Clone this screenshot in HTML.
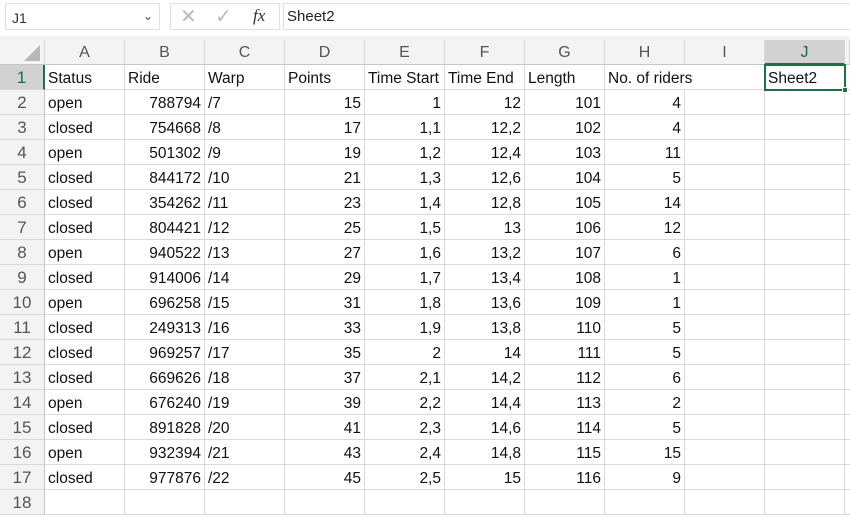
<!DOCTYPE html>
<html><head><style>
*{margin:0;padding:0;box-sizing:border-box}
body{width:850px;height:515px;overflow:hidden;background:#fff;font-family:"Liberation Sans",sans-serif;position:relative}
.top{position:absolute;left:0;top:0;width:850px;height:40px;background:#fff}
.nb{position:absolute;left:5px;top:3px;width:155px;height:27px;border:1px solid #e1e1e1;font-size:14px;color:#333;padding:6px 0 0 6px}
.nb span{position:absolute;right:6px;top:5px;font-size:12px;color:#444}
.fx{position:absolute;left:170px;top:3px;width:110px;height:27px;border:1px solid #e1e1e1;color:#bbb;font-size:20px}
.fb{position:absolute;left:283px;top:3px;width:567px;height:27px;border:1px solid #e1e1e1;border-right:none;font-size:15px;color:#222;padding:4px 0 0 3px}
.sep{position:absolute;left:0;top:36px;width:850px;height:4px;background:#f3f3f3}
.grid{position:absolute;left:0;top:40px}
.ch{position:absolute;top:0;height:25px;background:#f3f3f3;border-right:1px solid #d8d8d8;border-bottom:1px solid #c6c6c6;text-align:center;font-size:16px;color:#555;line-height:25px}
.rh{position:absolute;left:0;width:45px;height:25px;background:#f3f3f3;border-bottom:1px solid #d8d8d8;border-right:1px solid #c6c6c6;text-align:center;font-size:17px;color:#555;line-height:26px}
.c{position:absolute;height:25px;border-right:1px solid #dadada;border-bottom:1px solid #dadada;font-size:15.5px;color:#111;line-height:27px;padding:0 3px;white-space:nowrap}
.r{text-align:right}
</style></head><body>
<div class="top">
<div class="nb">J1<span>&#8964;</span></div>
<div class="fx"><span style="position:absolute;left:9px;top:0px">&#x2715;</span><span style="position:absolute;left:44px;top:0px">&#x2713;</span><span style="position:absolute;left:82px;top:2px;color:#333;font-family:'Liberation Serif',serif;font-style:italic;font-size:17px">fx</span></div>
<div class="fb">Sheet2</div>
</div>
<div class="sep"></div>
<div class="grid" id="g"></div>
<script>
var g=document.getElementById('g'),h='';
var cols='ABCDEFGHIJ'.split('');
h+='<div class="ch" style="left:0;width:45px"><svg width="45" height="25" style="position:absolute;left:0;top:0"><polygon points="40,5 40,21 24,21" fill="#b8b8b8"/></svg></div>';
for(var i=0;i<10;i++){var sel=i==9;h+='<div class="ch" style="left:'+(45+i*80)+'px;width:80px;'+(sel?'background:#d2d2d2;color:#1e6b40;border-bottom:2px solid #1e7145;':'')+'">'+cols[i]+'</div>';}
h+='<div class="ch" style="left:845px;width:5px"></div>';
var d=[["Status","Ride","Warp","Points","Time Start","Time End","Length","No. of riders"],
["open",788794,"/7",15,"1","12",101,4],["closed",754668,"/8",17,"1,1","12,2",102,4],["open",501302,"/9",19,"1,2","12,4",103,11],["closed",844172,"/10",21,"1,3","12,6",104,5],["closed",354262,"/11",23,"1,4","12,8",105,14],["closed",804421,"/12",25,"1,5","13",106,12],["open",940522,"/13",27,"1,6","13,2",107,6],["closed",914006,"/14",29,"1,7","13,4",108,1],["open",696258,"/15",31,"1,8","13,6",109,1],["closed",249313,"/16",33,"1,9","13,8",110,5],["closed",969257,"/17",35,"2","14",111,5],["closed",669626,"/18",37,"2,1","14,2",112,6],["open",676240,"/19",39,"2,2","14,4",113,2],["closed",891828,"/20",41,"2,3","14,6",114,5],["open",932394,"/21",43,"2,4","14,8",115,15],["closed",977876,"/22",45,"2,5","15",116,9],[]];
for(var r=0;r<18;r++){var y=25+r*25;
h+='<div class="rh" style="top:'+y+'px;'+(r==0?'background:#d2d2d2;color:#1e6b40;border-right:2px solid #1e7145;':'')+'">'+(r+1)+'</div>';
for(var c=0;c<10;c++){var v=d[r][c];var t=(v===undefined)?'':v;var right=r>0&&c!=0&&c!=2&&t!=='';
var ov=(r==0&&c==7)?'overflow:visible;':'overflow:hidden;';
var br=(r==0&&c==7)?'border-right-color:#fff;':'';
h+='<div class="c'+(right?' r':'')+'" style="left:'+(45+c*80)+'px;top:'+y+'px;width:80px;'+ov+br+'">'+t+'</div>';}
if(r==0)h+='<div class="c" style="left:765px;top:'+y+'px;width:80px">Sheet2</div>';
h+='<div class="c" style="left:845px;top:'+y+'px;width:5px;border-right:none"></div>';}
h+='<div style="position:absolute;left:764px;top:24px;width:82px;height:27px;border:2px solid #1e7145"></div><div style="position:absolute;left:842px;top:47px;width:6px;height:6px;background:#1e7145;border:1px solid #fff"></div>';
g.innerHTML=h;
</script>
</body></html>
